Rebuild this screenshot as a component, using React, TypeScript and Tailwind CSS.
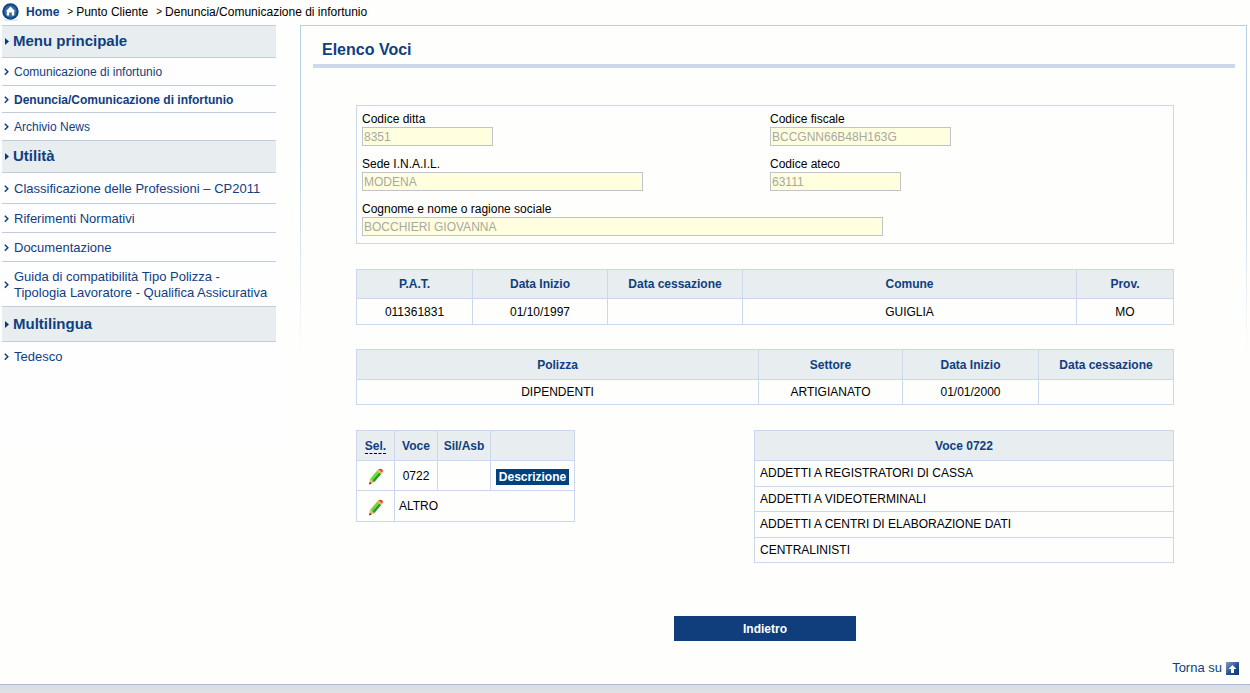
import React from "react";

type MenuItem = { label: string; active?: boolean; height: string };

const mainMenu: MenuItem[] = [
  { label: "Comunicazione di infortunio", height: "h-7" },
  { label: "Denuncia/Comunicazione di infortunio", active: true, height: "h-[27px]" },
  { label: "Archivio News", height: "h-7" },
];

const utilMenu: MenuItem[] = [
  { label: "Classificazione delle Professioni – CP2011", height: "h-[31px]" },
  { label: "Riferimenti Normativi", height: "h-[29px]" },
  { label: "Documentazione", height: "h-[29px]" },
  {
    label: "Guida di compatibilità Tipo Polizza - Tipologia Lavoratore - Qualifica Assicurativa",
    height: "h-[45px]",
  },
];

const voci = [
  "ADDETTI A REGISTRATORI DI CASSA",
  "ADDETTI A VIDEOTERMINALI",
  "ADDETTI A CENTRI DI ELABORAZIONE DATI",
  "CENTRALINISTI",
];

function HomeIcon() {
  return (
    <svg width="18" height="18" viewBox="0 0 18 18" className="shrink-0" aria-hidden="true">
      <ellipse cx="9" cy="17" rx="8" ry="1" fill="#dfe5ea" />
      <circle cx="8.5" cy="8.5" r="8.2" fill="#0b4583" />
      <circle cx="8.5" cy="8.5" r="6.2" fill="#5a8bbd" opacity="0.55" />
      <path d="M8.5 3.6 L13.2 8.2 H12.2 V12.6 H9.8 V9.6 H7.2 V12.6 H4.8 V8.2 H3.8 Z" fill="#fff" />
    </svg>
  );
}

function Pencil() {
  return (
    <svg width="16" height="17" viewBox="0 0 16 17" className="mx-auto block" aria-hidden="true">
      <path d="M1.2 16.4 L2 10.9 L6.2 14.2 Z" fill="#e8b870" />
      <path d="M1.2 16.4 L1.7 13.9 L3.6 15.3 Z" fill="#2a1c10" />
      <path d="M2 10.9 L9 2.7 L11.2 4.4 L4.2 12.6 Z" fill="#6fd83e" />
      <path d="M4.2 12.6 L11.2 4.4 L13.2 6 L6.2 14.2 Z" fill="#2a9a20" />
      <path d="M9 2.7 L10.2 1.3 L14.4 4.6 L13.2 6 Z" fill="#e3b54a" />
      <path d="M10.2 1.3 Q12 0 14.1 1.3 Q15.8 2.7 14.4 4.6 Z" fill="#e2452f" />
    </svg>
  );
}

function Chevron() {
  return (
    <svg width="5" height="8" viewBox="0 0 5 8" className="shrink-0" aria-hidden="true">
      <path d="M0.8 0.8 L3.8 3.8 L0.8 6.8" fill="none" stroke="#0d3f7e" strokeWidth="1.5" />
    </svg>
  );
}

function MenuHeading({ children, height }: { children: React.ReactNode; height: string }) {
  return (
    <h2
      className={`flex ${height} items-center gap-1 border-b border-[#c3cdd9] bg-[#e8edf0] pl-[3px] text-[15px] font-bold text-[#0f3f80]`}
    >
      <svg width="4" height="7" viewBox="0 0 4 7" className="shrink-0" aria-hidden="true">
        <path d="M0 0 L4 3.5 L0 7 Z" fill="#003d7a" />
      </svg>
      {children}
    </h2>
  );
}

function MenuList({ items }: { items: MenuItem[] }) {
  return (
    <ul>
      {items.map((item) => (
        <li key={item.label} className={`${item.height} border-b border-[#c3cdd9]`}>
          <a
            href="#"
            className={`flex h-full items-center gap-[5px] pt-px pr-2 pl-[2px] leading-4 ${item.active ? "font-bold" : ""}`}
          >
            <Chevron />
            <span>{item.label}</span>
          </a>
        </li>
      ))}
    </ul>
  );
}

function Field({ id, label, value, width }: { id: string; label: string; value: string; width: string }) {
  return (
    <div className="flex flex-col">
      <label htmlFor={id} className="leading-4 text-black">
        {label}
      </label>
      <input
        id={id}
        defaultValue={value}
        disabled
        className={`h-[19px] ${width} border border-[#c0c4c8] bg-[#ffffe0] px-px text-[#a8a8a0]`}
      />
    </div>
  );
}

const th = "border border-[#cbd8ec] bg-[#e8edf0] font-bold text-[#0f3f80]";
const td = "border border-[#cbd8ec] text-center";

type DataTableProps = {
  cols: string[];
  heads: string[];
  row: string[];
  headHeight: string;
  rowHeight: string;
};

function DataTable({ cols, heads, row, headHeight, rowHeight }: DataTableProps) {
  return (
    <table className="w-full table-fixed border-collapse">
      <colgroup>
        {cols.map((c, i) => (
          <col key={i} className={c} />
        ))}
      </colgroup>
      <thead>
        <tr className={headHeight}>
          {heads.map((h) => (
            <th key={h} className={th}>
              {h}
            </th>
          ))}
        </tr>
      </thead>
      <tbody>
        <tr className={rowHeight}>
          {row.map((c, i) => (
            <td key={i} className={td}>
              {c}
            </td>
          ))}
        </tr>
      </tbody>
    </table>
  );
}

export default function App() {
  return (
    <div
      id="top"
      className="flex min-h-screen flex-col bg-[#fefefc] font-['Liberation_Sans',Arial,sans-serif] text-[12px] text-black"
    >
      <nav className="flex h-[25px] items-center pb-[2px] pl-[2px]">
        <HomeIcon />
        <a href="#" className="ml-1.5 font-bold text-[#0f3f80]">
          Home
        </a>
        <span className="ml-2 text-[10px]">&gt;</span>
        <span className="ml-[3px]">Punto Cliente</span>
        <span className="ml-2 text-[10px]">&gt;</span>
        <span className="ml-[3px]">Denuncia/Comunicazione di infortunio</span>
      </nav>

      <div className="flex flex-1">
        <aside className="h-[420px] w-[276px] shrink-0 bg-[#fefdff] pl-[2px] text-[#0f3f80]">
          <div className="border-t border-[#c3cdd9]">
            <MenuHeading height="h-8">Menu principale</MenuHeading>
          </div>
          <MenuList items={mainMenu} />
          <MenuHeading height="h-8">Utilità</MenuHeading>
          <div className="text-[13px]">
            <MenuList items={utilMenu} />
          </div>
          <MenuHeading height="h-[35px]">Multilingua</MenuHeading>
          <a href="#" className="flex h-[30px] items-center gap-[5px] pl-[2px] text-[13px]">
            <Chevron />
            Tedesco
          </a>
        </aside>

        <div className="mr-[3px] ml-6 flex min-w-0 flex-1 flex-col">
          <div className="h-px bg-[#b9d0e2]" />
          <div className="flex flex-1">
            <div className="h-[330px] w-px shrink-0 bg-linear-to-b from-[#b9d0e2] from-40% to-transparent" />
            <main className="min-w-0 flex-1 pr-[11px] pl-3">
              <h1 className="h-[42px] border-b-4 border-[#cdd9ea] pt-3 pl-[9px] text-[16px] leading-6 font-bold text-[#0f3f80]">
                Elenco Voci
              </h1>

              <div className="mt-[37px] mr-[61px] ml-[43px]">
                <form className="grid grid-cols-[408px_1fr] gap-y-[10px] border border-[#cbd8ec] pt-[5px] pb-[7px] pl-[5px]">
                  <Field id="ditta" label="Codice ditta" value="8351" width="w-[131px]" />
                  <Field id="fiscale" label="Codice fiscale" value="BCCGNN66B48H163G" width="w-[181px]" />
                  <Field id="sede" label="Sede I.N.A.I.L." value="MODENA" width="w-[281px]" />
                  <Field id="ateco" label="Codice ateco" value="63111" width="w-[131px]" />
                  <div className="col-span-2">
                    <Field
                      id="ragione"
                      label="Cognome e nome o ragione sociale"
                      value="BOCCHIERI GIOVANNA"
                      width="w-[521px]"
                    />
                  </div>
                </form>

                <div className="mt-[25px]">
                  <DataTable
                    cols={["w-[116px]", "w-[135px]", "w-[135px]", "", "w-[97px]"]}
                    heads={["P.A.T.", "Data Inizio", "Data cessazione", "Comune", "Prov."]}
                    row={["011361831", "01/10/1997", "", "GUIGLIA", "MO"]}
                    headHeight="h-[29px]"
                    rowHeight="h-[26px]"
                  />
                </div>

                <div className="mt-6">
                  <DataTable
                    cols={["", "w-[144px]", "w-[136px]", "w-[135px]"]}
                    heads={["Polizza", "Settore", "Data Inizio", "Data cessazione"]}
                    row={["DIPENDENTI", "ARTIGIANATO", "01/01/2000", ""]}
                    headHeight="h-[30px]"
                    rowHeight="h-[25px]"
                  />
                </div>

                <div className="mt-[25px] flex items-start justify-between">
                  <table className="w-[219px] table-fixed border-collapse">
                    <colgroup>
                      <col className="w-[38px]" />
                      <col className="w-[43px]" />
                      <col className="w-[53px]" />
                      <col />
                    </colgroup>
                    <thead>
                      <tr className="h-[30px]">
                        <th className={th}>
                          <abbr title="Seleziona" className="border-b border-dashed border-black no-underline">
                            Sel.
                          </abbr>
                        </th>
                        <th className={th}>Voce</th>
                        <th className={th}>Sil/Asb</th>
                        <th className={th} />
                      </tr>
                    </thead>
                    <tbody>
                      <tr className="h-[30px]">
                        <td className={`${td} pt-[2px]`}>
                          <button type="button" aria-label="Seleziona 0722" className="block w-full">
                            <Pencil />
                          </button>
                        </td>
                        <td className={td}>0722</td>
                        <td className={td} />
                        <td className={`${td} pt-[2px]`}>
                          <button
                            type="button"
                            className="mx-auto block h-4 w-[73px] bg-[#00427f] leading-4 font-bold text-white"
                          >
                            Descrizione
                          </button>
                        </td>
                      </tr>
                      <tr className="h-[31px]">
                        <td className={`${td} pt-[2px]`}>
                          <button type="button" aria-label="Seleziona altro" className="block w-full">
                            <Pencil />
                          </button>
                        </td>
                        <td colSpan={3} className="border border-[#cbd8ec] pl-1">
                          ALTRO
                        </td>
                      </tr>
                    </tbody>
                  </table>

                  <table className="h-[133px] w-[420px] border-collapse">
                    <thead>
                      <tr className="h-[30px]">
                        <th className={th}>Voce 0722</th>
                      </tr>
                    </thead>
                    <tbody>
                      {voci.map((v) => (
                        <tr key={v}>
                          <td className="border border-[#cbd8ec] pl-[5px]">{v}</td>
                        </tr>
                      ))}
                    </tbody>
                  </table>
                </div>

                <button
                  type="button"
                  className="mx-auto mt-[53px] block h-[25px] w-[182px] bg-[#103d7c] font-bold text-white"
                >
                  Indietro
                </button>
              </div>
            </main>
            <div className="h-[330px] w-px shrink-0 bg-linear-to-b from-[#b9d0e2] from-40% to-transparent" />
          </div>
          <div className="flex h-6 justify-end pr-2">
            <a href="#top" className="flex h-4 items-center gap-1 text-[13px] text-[#0f3f80]">
              Torna su
              <svg width="13" height="13" viewBox="0 0 13 13" aria-hidden="true">
                <defs>
                  <linearGradient id="up" x1="0" y1="0" x2="1" y2="1">
                    <stop offset="0" stopColor="#7f9cc8" />
                    <stop offset="0.6" stopColor="#1d4a8a" />
                    <stop offset="1" stopColor="#0b3b78" />
                  </linearGradient>
                </defs>
                <rect width="13" height="13" fill="url(#up)" />
                <path d="M6.5 3 L10.5 7 H8 V11 H5 V7 H2.5 Z" fill="#fff" />
              </svg>
            </a>
          </div>
        </div>
      </div>

      <footer className="h-[9px] border-t border-[#b0b8d0] bg-linear-to-b from-[#d5dde6] to-[#dfe3e6]" />
    </div>
  );
}
